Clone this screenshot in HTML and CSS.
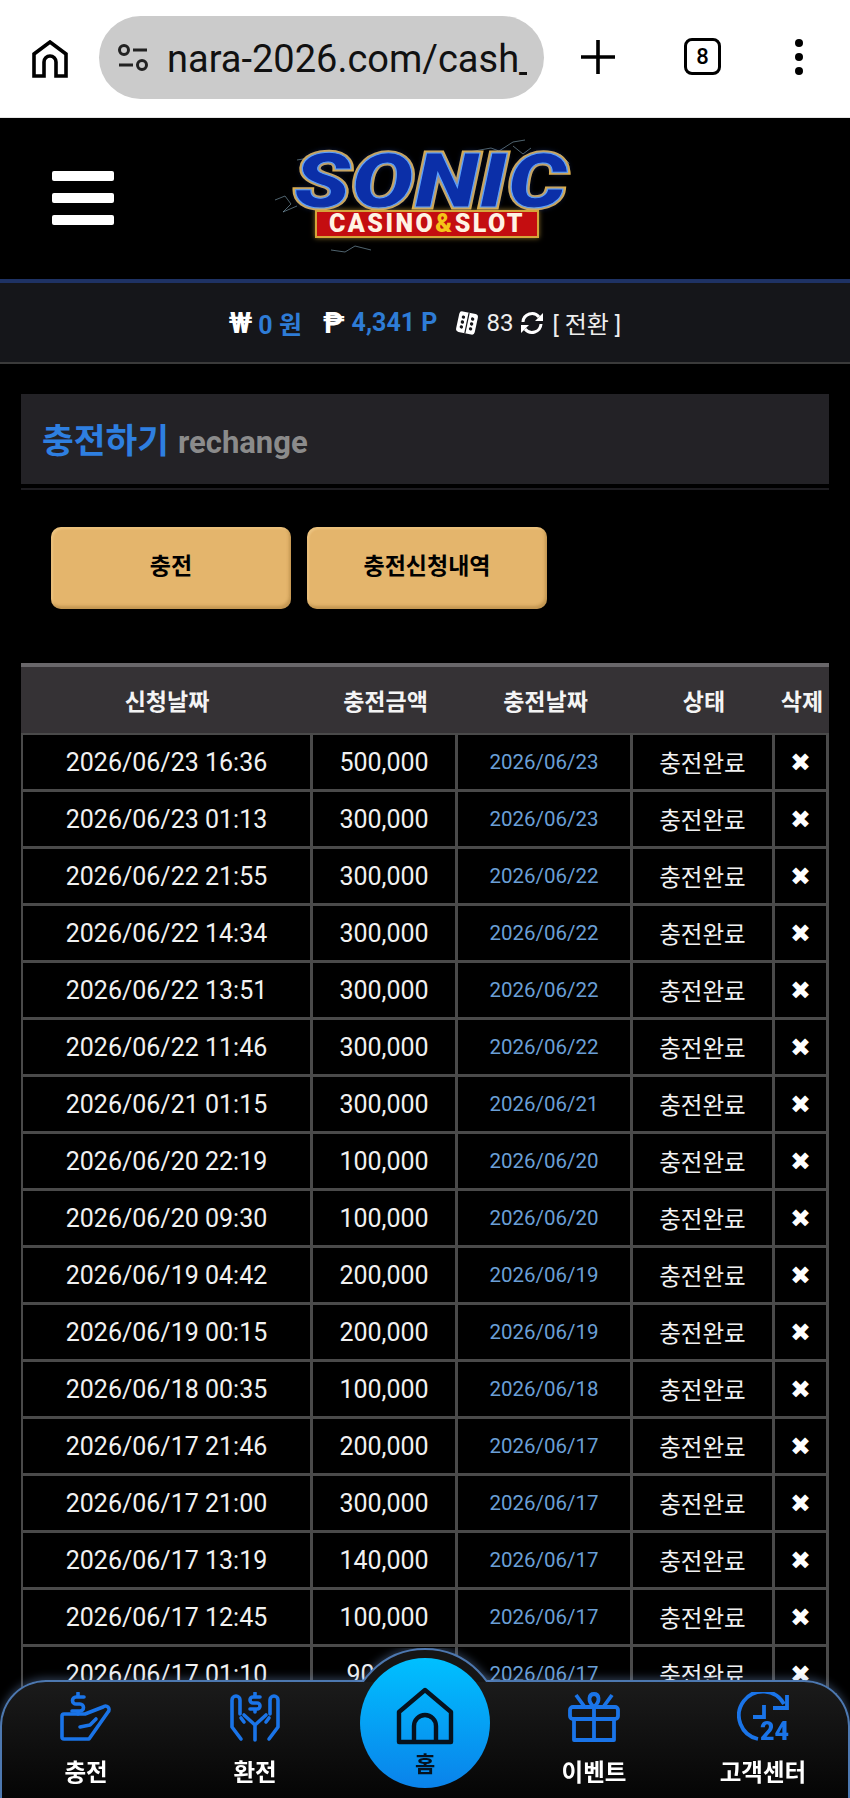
FILE: index.html
```html
<!DOCTYPE html>
<html>
<head>
<meta charset="utf-8">
<title>충전하기</title>
<link rel="stylesheet" href="styles.css">
</head>
<body>

<div class="browserBar">
    <svg class="homeIcon" width="36" height="38" viewBox="0 0 36 38"><path d="M2 36V14L18 2l16 12v22H24V22a6 6 0 0 0-12 0v14z" fill="none" stroke="#000" stroke-width="3.6" stroke-linejoin="miter"/></svg>
    <div class="urlPill">
        <svg width="32" height="28" viewBox="0 0 32 28"><g fill="none" stroke="#222" stroke-width="3"><circle cx="7" cy="6" r="4.5"/><path d="M16 6h14M2 21h14"/><circle cx="25" cy="21" r="4.5"/></g></svg>
        <span class="urlText">nara-2026.com/cash_</span>
    </div>
    <svg class="plusIcon" width="34" height="34" viewBox="0 0 34 34"><path d="M17 0v34M0 17h34" stroke="#000" stroke-width="3.6"/></svg>
    <div class="tabCount">8</div>
    <div class="menuDots"><i></i><i></i><i></i></div>
</div>

<div class="siteHeader">
    <div class="burger"><i></i><i></i><i></i></div>
    <div class="logo">
        <svg class="bolts" width="320" height="120" viewBox="0 0 320 120"><g fill="none" stroke="#8fb4c8" stroke-width="1" opacity=".55"><path d="M26 22l12-2 10 3 14-1M198 14l22-4 8 3 14-9 12-2M252 20l22-4 16 1 8 8-4 10M4 62l10-4 6 8-8 8 14-6M60 112l14 2 10-6 16 4M242 8l10 8 8-6"/></g></svg>
        <div class="logoWord">SONIC</div>
        <div class="logoBanner">CASINO<em>&amp;</em>SLOT</div>
    </div>
</div>

<div class="walletBar">
    <span class="coin">₩</span><b class="money">0 원</b>
    <span class="coin coinP">₱</span><b class="money">4,341 P</b>
    <svg class="dice" width="24" height="26" viewBox="0 0 24 26"><g transform="rotate(12 12 13)"><rect x="2.5" y="2.5" width="19" height="21" rx="3" fill="#fff"/><path d="M12 2.500v21" stroke="#15161a" stroke-width="1.2"/><g fill="#15161a"><circle cx="7.300" cy="8" r="1.700"/><circle cx="7.300" cy="13" r="1.700"/><circle cx="7.300" cy="18" r="1.700"/><circle cx="16.700" cy="8" r="1.700"/><circle cx="16.700" cy="13" r="1.700"/><circle cx="16.700" cy="18" r="1.700"/></g></g></svg>
    <span class="chip">83</span>
    <svg class="refresh" width="24" height="24" viewBox="0 0 24 24"><g fill="none" stroke="#fff" stroke-width="3"><path d="M3 11a9 9 0 0 1 16-5"/><path d="M21 13a9 9 0 0 1-16 5"/></g><path d="M23 2v8h-8zM1 22v-8h8z" fill="#fff"/></svg>
    <span class="swap">[ 전환 ]</span>
</div>

<div class="content">
    <div class="pageTitle"><b>충전하기</b> <span>rechange</span></div>
    <div class="titleLine"></div>

    <div class="tabs">
        <a class="tabBtn">충전</a>
        <a class="tabBtn">충전신청내역</a>
    </div>

    <table class="histTable">
        <thead>
            <tr><th class="c1">신청날짜</th><th class="c2">충전금액</th><th class="c3">충전날짜</th><th class="c4">상태</th><th class="c5">삭제</th></tr>
        </thead>
        <tbody>
            <tr><td>2026/06/23 16:36</td><td>500,000</td><td class="dt">2026/06/23</td><td>충전완료</td><td class="del">✖</td></tr>
            <tr><td>2026/06/23 01:13</td><td>300,000</td><td class="dt">2026/06/23</td><td>충전완료</td><td class="del">✖</td></tr>
            <tr><td>2026/06/22 21:55</td><td>300,000</td><td class="dt">2026/06/22</td><td>충전완료</td><td class="del">✖</td></tr>
            <tr><td>2026/06/22 14:34</td><td>300,000</td><td class="dt">2026/06/22</td><td>충전완료</td><td class="del">✖</td></tr>
            <tr><td>2026/06/22 13:51</td><td>300,000</td><td class="dt">2026/06/22</td><td>충전완료</td><td class="del">✖</td></tr>
            <tr><td>2026/06/22 11:46</td><td>300,000</td><td class="dt">2026/06/22</td><td>충전완료</td><td class="del">✖</td></tr>
            <tr><td>2026/06/21 01:15</td><td>300,000</td><td class="dt">2026/06/21</td><td>충전완료</td><td class="del">✖</td></tr>
            <tr><td>2026/06/20 22:19</td><td>100,000</td><td class="dt">2026/06/20</td><td>충전완료</td><td class="del">✖</td></tr>
            <tr><td>2026/06/20 09:30</td><td>100,000</td><td class="dt">2026/06/20</td><td>충전완료</td><td class="del">✖</td></tr>
            <tr><td>2026/06/19 04:42</td><td>200,000</td><td class="dt">2026/06/19</td><td>충전완료</td><td class="del">✖</td></tr>
            <tr><td>2026/06/19 00:15</td><td>200,000</td><td class="dt">2026/06/19</td><td>충전완료</td><td class="del">✖</td></tr>
            <tr><td>2026/06/18 00:35</td><td>100,000</td><td class="dt">2026/06/18</td><td>충전완료</td><td class="del">✖</td></tr>
            <tr><td>2026/06/17 21:46</td><td>200,000</td><td class="dt">2026/06/17</td><td>충전완료</td><td class="del">✖</td></tr>
            <tr><td>2026/06/17 21:00</td><td>300,000</td><td class="dt">2026/06/17</td><td>충전완료</td><td class="del">✖</td></tr>
            <tr><td>2026/06/17 13:19</td><td>140,000</td><td class="dt">2026/06/17</td><td>충전완료</td><td class="del">✖</td></tr>
            <tr><td>2026/06/17 12:45</td><td>100,000</td><td class="dt">2026/06/17</td><td>충전완료</td><td class="del">✖</td></tr>
            <tr><td>2026/06/17 01:10</td><td>90,000</td><td class="dt">2026/06/17</td><td>충전완료</td><td class="del">✖</td></tr>
        </tbody>
    </table>
</div>

<div class="bottomNav">
    <div class="navBump"></div>
    <div class="navItems">
        <a class="navItem">
            <svg width="52" height="52" viewBox="0 0 52 52"><g fill="none" stroke="#1a74e8" stroke-width="3.6" stroke-linecap="round" stroke-linejoin="round"><path d="M4 22h21l18-7a3.500 3.500 0 0 1 5 5L29 47H4a2 2 0 0 1-2-2V24a2 2 0 0 1 2-2z"/><path d="M20 35l10-2 6-6"/><path d="M24 5h-8a3.500 3.500 0 0 0 0 7h4a3.500 3.500 0 0 1 0 7h-8M18 1v3M18 19v3"/></g></svg>
            <span>충전</span>
        </a>
        <a class="navItem">
            <svg width="52" height="52" viewBox="0 0 52 52"><g fill="none" stroke="#1a74e8" stroke-width="3.6" stroke-linecap="round" stroke-linejoin="round"><path d="M12 47L3 35V8a4 4 0 0 1 8 0v14M40 47l9-12V8a4 4 0 0 0-8 0v14"/><path d="M26 48V33L15 23M26 33l11-10M15 30l-3-4M37 30l3-4"/><path d="M31 5h-7a3 3 0 0 0 0 6h4a3 3 0 0 1 0 6h-7M26 1v3M26 17v3"/></g></svg>
            <span>환전</span>
        </a>
        <a class="navItem navHome">
            <svg width="58" height="58" viewBox="0 0 58 58"><g fill="none" stroke="#06121e" stroke-width="4.400" stroke-linejoin="round"><path d="M3 25L29 3l26 22v30H3z"/><path d="M18 55V39a11 11 0 0 1 22 0v16"/></g></svg>
            <span>홈</span>
        </a>
        <a class="navItem">
            <svg width="52" height="52" viewBox="0 0 52 52"><g fill="none" stroke="#1a74e8" stroke-width="3.800" stroke-linejoin="round"><rect x="2" y="15" width="48" height="12" rx="3"/><path d="M6 27v21h40V27M26 15v33"/><path d="M26 15c-7-6-5-13 0-13s7 7 0 13zM8 3l8 11M44 3l-8 11"/></g></svg>
            <span>이벤트</span>
        </a>
        <a class="navItem">
            <svg width="52" height="52" viewBox="0 0 52 52"><g fill="none" stroke="#1a74e8" stroke-width="3.800"><path d="M21 47A24 24 0 1 1 47 12"/><path d="M27 13v12H16"/><path d="M36 16h14V3"/></g><text x="23" y="48" class="clock24">24</text></svg>
            <span>고객센터</span>
        </a>
    </div>
</div>

</body>
</html>
```

FILE: styles.css
```css
html, body {
    margin: 0;
    padding: 0;
    height: 1798px;
    overflow: hidden;
    background: #000;
    color: #fff;
    font-family: Roboto, "Noto Sans CJK KR", sans-serif;
    font-size: 24px;
}

/* browser chrome */
.browserBar {
    height: 117px;
    background: #fff;
    border-bottom: 1px solid #e6e6e6;
    display: flex;
    align-items: center;
    padding-left: 32px;
    color: #000;
}
.homeIcon {
    flex: none;
    margin-top: 1px;
}
.urlPill {
    width: 445px;
    height: 83px;
    margin-left: 31px;
    margin-top: -2px;
    background: #cbcbcb;
    border-radius: 42px;
    display: flex;
    align-items: center;
    padding-left: 18px;
    box-sizing: border-box;
    overflow: hidden;
}
.urlPill svg {
    flex: none;
}
.urlText {
    margin-left: 18px;
    margin-top: 2px;
    font-size: 38px;
    white-space: nowrap;
    color: #111;
    width: 360px;
    overflow: hidden;
}
.plusIcon {
    flex: none;
    margin-left: 37px;
    margin-top: -4px;
}
.tabCount {
    width: 31px;
    height: 31px;
    margin-left: 69px;
    margin-top: -4px;
    border: 3.500px solid #000;
    border-radius: 8px;
    font-size: 22px;
    font-weight: 500;
    text-align: center;
    line-height: 31px;
}
.menuDots {
    margin-left: 74px;
    margin-top: -4px;
    display: flex;
    flex-direction: column;
    gap: 6px;
}
.menuDots i {
    width: 8px;
    height: 8px;
    background: #000;
    border-radius: 50%;
}

/* site header */
.siteHeader {
    height: 161px;
    background: #000;
    border-bottom: 4px solid #1e3264;
    display: flex;
    align-items: center;
    justify-content: center;
    position: relative;
}
.burger {
    position: absolute;
    left: 52px;
    top: 53px;
    display: flex;
    flex-direction: column;
    gap: 12px;
}
.burger i {
    width: 62px;
    height: 10px;
    background: #fff;
    border-radius: 2px;
}
.logo {
    width: 320px;
    height: 120px;
    margin-left: 12px;
    margin-top: -2px;
    position: relative;
    text-align: center;
}
.bolts {
    position: absolute;
    left: 0;
    top: 0;
}
.logoWord {
    position: relative;
    margin-top: 12px;
    height: 62px;
    font-family: Roboto, sans-serif;
    font-size: 76px;
    line-height: 62px;
    font-weight: 900;
    font-style: italic;
    letter-spacing: 1px;
    color: #0b2fa8;
    -webkit-text-stroke: 5px #e3b145;
    paint-order: stroke fill;
    transform: scaleX(1.22);
    text-shadow: 0 0 6px rgba(60, 110, 255, .6);
}
.logoWord::after {
    content: "SONIC";
    position: absolute;
    left: 0;
    right: 0;
    top: 0;
    color: transparent;
    -webkit-text-stroke: 1px #5aa0ff;
    text-shadow: none;
}
.logoBanner {
    position: relative;
    width: 224px;
    height: 28px;
    margin: -2px 0 0 44px;
    background: #c40d10;
    border: 2px solid #d5a53a;
    box-sizing: border-box;
    font-family: Roboto, sans-serif;
    font-weight: 900;
    font-size: 25px;
    line-height: 24px;
    letter-spacing: 2.500px;
    color: #fff3e4;
    white-space: nowrap;
    box-shadow: 0 0 5px rgba(240, 190, 70, .6);
}
.logoBanner em {
    font-style: normal;
    color: #f5c518;
}

/* wallet */
.walletBar {
    height: 79px;
    background: #15161a;
    border-bottom: 2px solid #3a3a3a;
    display: flex;
    align-items: center;
    justify-content: center;
    font-size: 24px;
    white-space: nowrap;
    color: #eee;
}
.coin {
    font-size: 29px;
    font-weight: bold;
    color: #fff;
    margin-right: 6px;
}
.coinP {
    margin-left: 21px;
    margin-right: 7px;
}
.money {
    color: #2e7cd6;
    font-weight: bold;
    font-size: 25px;
}
.dice {
    margin-left: 18px;
    margin-right: 7px;
}
.refresh {
    margin-left: 7px;
    margin-right: 8px;
}

/* content */
.content {
    padding: 30px 21px 0;
}
.pageTitle {
    height: 90px;
    background: #232226;
    box-sizing: border-box;
    padding-left: 21px;
    line-height: 94px;
    white-space: nowrap;
    overflow: hidden;
}
.pageTitle b {
    font-size: 34.500px;
    color: #2e7fe0;
}
.pageTitle span {
    margin-left: 3px;
    font-size: 31px;
    font-weight: bold;
    color: #8b8b8b;
}
.titleLine {
    height: 2px;
    margin-top: 4px;
    background: #1d1c20;
}
.tabs {
    display: flex;
    gap: 16px;
    padding: 37px 0 54px 30px;
}
.tabBtn {
    width: 240px;
    height: 82px;
    line-height: 80px;
    text-align: center;
    background: #e4b56c;
    border-radius: 10px;
    color: #000;
    font-size: 23px;
    font-weight: bold;
    box-shadow: inset -2px -3px 3px rgba(120, 80, 20, .3), inset 2px 2px 2px rgba(255, 225, 170, .3);
}

/* history table */
.histTable {
    width: 808px;
    table-layout: fixed;
    border-collapse: separate;
    border-spacing: 0;
    color: #f1f1f1;
}
.histTable th {
    height: 66px;
    padding: 0;
    background: #353235;
    border-top: 4px solid #69676a;
    font-size: 23px;
    font-weight: bold;
    color: #f4f4f4;
    white-space: nowrap;
}
.histTable tbody tr:first-child td {
    border-top-width: 2px;
}
.histTable td {
    height: 54px;
    padding: 0;
    text-align: center;
    font-size: 23.500px;
    border: 2px solid #4a4a4a;
    border-width: 3px 3px 0 0;
    white-space: nowrap;
}
.histTable td:first-child {
    border-left: 2px solid #4a4a4a;
}
.histTable td:nth-child(-n+2) {
    font-size: 25px;
}
.c1 { width: 292px; }
.c2 { width: 145px; }
.c3 { width: 175px; }
.c4 { width: 142px; }
.c5 { width: 54px; }
.histTable .dt {
    font-size: 20.500px;
    color: #6a9fd6;
}
.histTable .del {
    font-size: 25px;
    color: #fff;
}

/* fixed bottom menu */
.bottomNav {
    position: fixed;
    left: 0;
    right: 0;
    bottom: 0;
    height: 118px;
    background: linear-gradient(180deg, #1b1b1b 0%, #050505 100%);
    border: 2px solid #4d78b0;
    border-bottom: 0;
    border-radius: 46px 46px 0 0;
    box-sizing: border-box;
    box-shadow: 0 -2px 8px rgba(130, 170, 230, .35);
}
.navBump {
    position: absolute;
    left: 347px;
    top: -34px;
    width: 152px;
    height: 152px;
    border-radius: 50%;
    background: #151515;
    border: 2px solid #4d78b0;
    box-sizing: border-box;
    clip-path: inset(0 0 118px 0);
    box-shadow: 0 -2px 8px rgba(130, 170, 230, .35);
}
.navItems {
    position: relative;
    display: flex;
    height: 100%;
    padding-top: 10px;
    box-sizing: border-box;
}
.navItem {
    width: 170px;
    display: flex;
    flex-direction: column;
    align-items: center;
    font-size: 23.500px;
    font-weight: bold;
    color: #fff;
    margin-left: -1px;
}
.navItem span {
    margin-top: 12px;
    line-height: 34px;
}
.navHome {
    position: relative;
    top: -34px;
    width: 130px;
    height: 130px;
    margin: 0 20px;
    flex: none;
    border-radius: 50%;
    background: linear-gradient(180deg, #00c0ff 0%, #0a82ea 100%);
    color: #06121e;
    font-size: 22px;
    padding-top: 29px;
    box-sizing: border-box;
}
.navHome span {
    margin-top: 5px;
    line-height: 30px;
}
.clock24 {
    font-family: Roboto, sans-serif;
    font-size: 25px;
    font-weight: 900;
    fill: #1a74e8;
}
```
